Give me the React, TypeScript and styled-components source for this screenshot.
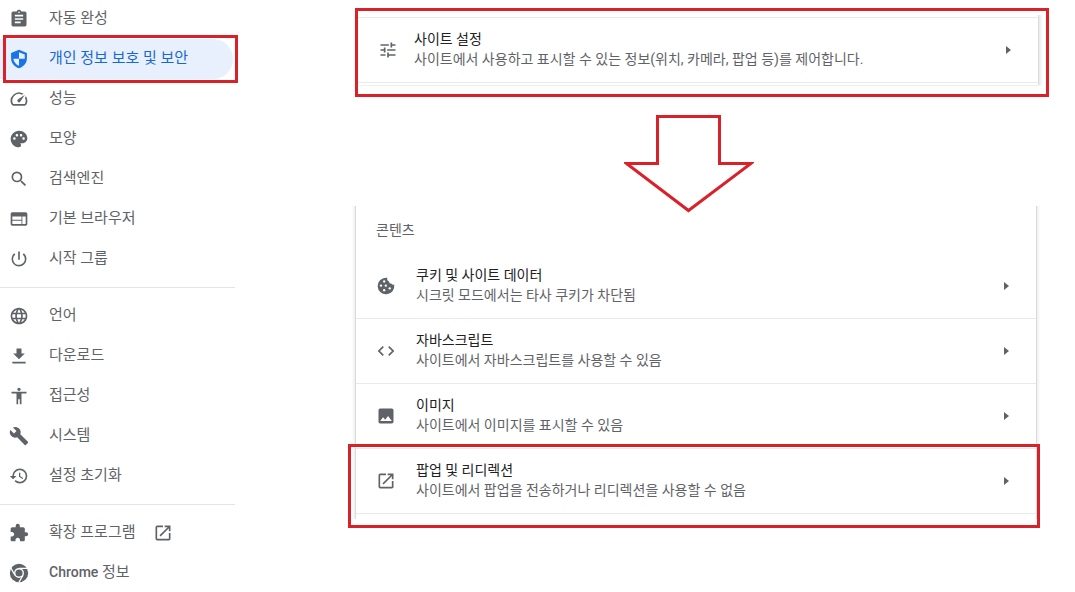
import React from 'react';
import styled, { createGlobalStyle, css } from 'styled-components';
import {
  MdAssignment, MdOutlineSpeed, MdPalette, MdSearch, MdWeb, MdPowerSettingsNew, MdLanguage,
  MdAccessibility, MdBuild, MdHistory, MdExtension, MdOpenInNew, MdCode, MdImage, MdTune,
} from 'react-icons/md';

const RED = '#d92129';
const GREY = '#5f6368';

const GlobalStyle = createGlobalStyle`
  * { box-sizing: border-box; }
  body {
    margin: 0;
    background: #fff;
    color: #202124;
    font-family: Roboto, "Noto Sans CJK KR", sans-serif;
    font-size: 14px;
    overflow-x: hidden;
  }
`;

const Page = styled.div`
  display: flex;
  align-items: flex-start;
`;

const Sidebar = styled.nav`
  flex: 0 0 235px;
  margin-top: -1px;
`;

const MenuList = styled.ul`
  list-style: none;
  margin: 0;
  padding: 0;
`;

const MenuItem = styled.li`
  position: relative;
`;

const MenuLink = styled.a<{ $active?: boolean }>`
  display: flex;
  align-items: center;
  height: 40px;
  margin-right: 2px;
  padding-left: 9px;
  border-radius: 0 20px 20px 0;
  color: ${GREY};
  font-size: 15px;
  text-decoration: none;
  ${p => p.$active && css`
    background: #e8f0fe;
    color: #1967d2;
  `}
  svg {
    flex: none;
    ${p => p.$active && css`color: #1a73e8;`}
  }
`;

const MenuLabel = styled.span`
  margin: 0 17px 0 20px;
  padding-bottom: 2px;
  line-height: 20px;
`;

const Latin = styled.span`
  font-size: 14px;
  font-weight: 500;
`;

const Divider = styled.hr`
  height: 1px;
  margin: 8px 0;
  border: 0;
  background: #e4e5e7;
`;

const Callout = styled.div<{ $inset: string }>`
  position: absolute;
  inset: ${p => p.$inset};
  border: 3px solid ${RED};
  pointer-events: none;
`;

const Main = styled.main`
  flex: 1;
  min-width: 0;
  padding: 8px 26px 0 120px;
`;

const FramedPanel = styled.section`
  border: 3px solid ${RED};
  padding: 4px 8px 9px 0;
  overflow: hidden;
`;

const SettingCard = styled.div`
  padding: 2px 0;
  clip-path: inset(0 -6px -1px 0);
  box-shadow: 1px 0 0 #dadbdc, 2px 0 3px 1px rgba(60, 64, 67, 0.12);
`;

const ContentCard = styled.section`
  margin: 0 13px 0 1px;
  padding-bottom: 5px;
  clip-path: inset(0 -5px);
  box-shadow: 0 0 0 1px #dadbdc, 0 0 3px 2px rgba(60, 64, 67, 0.12);
`;

const CardHeading = styled.h2`
  height: 48px;
  margin: 0;
  padding-left: 20px;
  color: ${GREY};
  font-size: 14px;
  font-weight: 400;
  line-height: 48px;
`;

const CardArea = styled.div`
  position: relative;
`;

const Row = styled.button<{ $lined?: boolean }>`
  display: flex;
  align-items: center;
  gap: ${p => (p.$lined ? 16 : 20)}px;
  width: 100%;
  height: ${p => (p.$lined ? 66 : 65)}px;
  padding: 0 27px 0 20px;
  border: 0;
  border-top: ${p => (p.$lined ? '1px solid #e8eaed' : '0')};
  border-bottom: 1px solid #e8eaed;
  background: none;
  font-family: inherit;
  text-align: left;
  color: ${GREY};
  svg { flex: none; }
`;

const RowText = styled.span`
  flex: 1;
  padding-bottom: 2px;
  font-size: 14px;
  line-height: 20px;
`;

const RowTitle = styled.span`
  display: block;
  color: #202124;
`;

const RowNote = styled.span`
  display: block;
`;

const ArrowHolder = styled.div`
  position: relative;
  display: flex;
  justify-content: center;
  margin: 18px 0 -7px;
  padding-right: 26px;
`;

const Glyph = ({ d }: { d: string }) => (
  <svg width="20" height="20" viewBox="0 0 24 24" fill="currentColor" aria-hidden="true">
    <path fillRule="evenodd" d={d} />
  </svg>
);

const DownloadIcon = () => <Glyph d="M19 9h-4V3H9v6H5l7 7 7-7zM4 19v2h16v-2z" />;

const ShieldIcon = () => (
  <Glyph d="M12 1L2.500 4.800V11c0 5.700 4 10.600 9.500 12 5.500-1.400 9.500-6.300 9.500-12V4.800L12 1zM12 3.800l6.900 2.700V11.800H12zM12 11.800V20.200c-3.600-1.300-6.300-4.600-6.800-8.400z" />
);

const ChromeIcon = () => (
  <svg width="20" height="20" viewBox="0 0 24 24" aria-hidden="true">
    <circle cx="12" cy="12" r="11" fill="currentColor" />
    <circle cx="12" cy="12" r="5.9" fill="#fff" />
    <path d="M12 6.5H22M16.8 14.7L11.8 23.4M7.2 14.7L2.2 6" stroke="#fff" strokeWidth="1.6" />
    <circle cx="12" cy="12" r="4.3" fill="currentColor" />
  </svg>
);

const CookieIcon = () => (
  <svg width="20" height="20" viewBox="0 0 24 24" fill="currentColor" aria-hidden="true">
    <path d="M12 2a10 10 0 1 0 9.9 8.6c-1.3.2-2.3-.3-2.9-1.4-1.9.4-3.4-.8-3.3-2.6-1.800-.3-2.700-2-2.100-4.500A10 10 0 0 0 12 2z" />
    <g fill="#fff">
      <circle cx="9.800" cy="6.600" r="1.400" />
      <circle cx="6" cy="11.500" r="1.400" />
      <circle cx="11.800" cy="11.500" r="1.400" />
      <circle cx="9.800" cy="17" r="1.400" />
      <circle cx="16.500" cy="14.800" r="1.400" />
    </g>
  </svg>
);

const ChevronIcon = () => (
  <svg width="5" height="8" viewBox="0 0 5 8" fill={GREY} aria-hidden="true">
    <path d="M0 0l5 4-5 4z" />
  </svg>
);

const DownArrow = () => (
  <svg width="130" height="98" viewBox="0 0 130 98" fill="none" aria-hidden="true">
    <path d="M33.5 1.5H95.500V48.500H127L64.500 95.500L2.500 48.500H33.5z" stroke={RED} strokeWidth="3" />
  </svg>
);

type Entry = { icon: React.ReactNode; label: React.ReactNode; active?: boolean; external?: boolean };

const groups: Entry[][] = [
  [
    { icon: <MdAssignment size={20} />, label: '자동 완성' },
    { icon: <ShieldIcon />, label: '개인 정보 보호 및 보안', active: true },
    { icon: <MdOutlineSpeed size={20} />, label: '성능' },
    { icon: <MdPalette size={20} />, label: '모양' },
    { icon: <MdSearch size={20} />, label: '검색엔진' },
    { icon: <MdWeb size={20} />, label: '기본 브라우저' },
    { icon: <MdPowerSettingsNew size={20} />, label: '시작 그룹' },
  ],
  [
    { icon: <MdLanguage size={20} />, label: '언어' },
    { icon: <DownloadIcon />, label: '다운로드' },
    { icon: <MdAccessibility size={20} />, label: '접근성' },
    { icon: <MdBuild size={20} />, label: '시스템' },
    { icon: <MdHistory size={20} />, label: '설정 초기화' },
  ],
  [
    { icon: <MdExtension size={20} />, label: '확장 프로그램', external: true },
    { icon: <ChromeIcon />, label: <><Latin>Chrome</Latin> 정보</> },
  ],
];

const rows = [
  { icon: <CookieIcon />, title: '쿠키 및 사이트 데이터', note: '시크릿 모드에서는 타사 쿠키가 차단됨' },
  { icon: <MdCode size={20} />, title: '자바스크립트', note: '사이트에서 자바스크립트를 사용할 수 있음' },
  { icon: <MdImage size={20} />, title: '이미지', note: '사이트에서 이미지를 표시할 수 있음' },
  { icon: <MdOpenInNew size={20} />, title: '팝업 및 리디렉션', note: '사이트에서 팝업을 전송하거나 리디렉션을 사용할 수 없음' },
];

type SettingProps = { icon: React.ReactNode; title: string; note: string; lined?: boolean };

const Setting = ({ icon, title, note, lined }: SettingProps) => (
  <Row type="button" $lined={lined}>
    {icon}
    <RowText>
      <RowTitle>{title}</RowTitle>
      <RowNote>{note}</RowNote>
    </RowText>
    <ChevronIcon />
  </Row>
);

export default function App() {
  return (
    <Page>
      <GlobalStyle />
      <Sidebar>
        {groups.map((group, g) => (
          <React.Fragment key={g}>
            {g > 0 && <Divider />}
            <MenuList>
              {group.map((entry, i) => (
                <MenuItem key={i}>
                  <MenuLink href="#" $active={entry.active}>
                    {entry.icon}
                    <MenuLabel>{entry.label}</MenuLabel>
                    {entry.external && <MdOpenInNew size={20} />}
                  </MenuLink>
                  {entry.active && <Callout $inset="-4px -3px -4px 3px" />}
                </MenuItem>
              ))}
            </MenuList>
          </React.Fragment>
        ))}
      </Sidebar>
      <Main>
        <FramedPanel>
          <SettingCard>
            <Setting
              lined
              icon={<MdTune size={20} />}
              title="사이트 설정"
              note="사이트에서 사용하고 표시할 수 있는 정보(위치, 카메라, 팝업 등)를 제어합니다."
            />
          </SettingCard>
        </FramedPanel>
        <ArrowHolder>
          <DownArrow />
        </ArrowHolder>
        <CardArea>
          <ContentCard>
            <CardHeading>콘텐츠</CardHeading>
            {rows.map(row => <Setting key={row.title} {...row} />)}
          </ContentCard>
          <Callout $inset="238px 9px -9px -7px" />
        </CardArea>
      </Main>
    </Page>
  );
}
